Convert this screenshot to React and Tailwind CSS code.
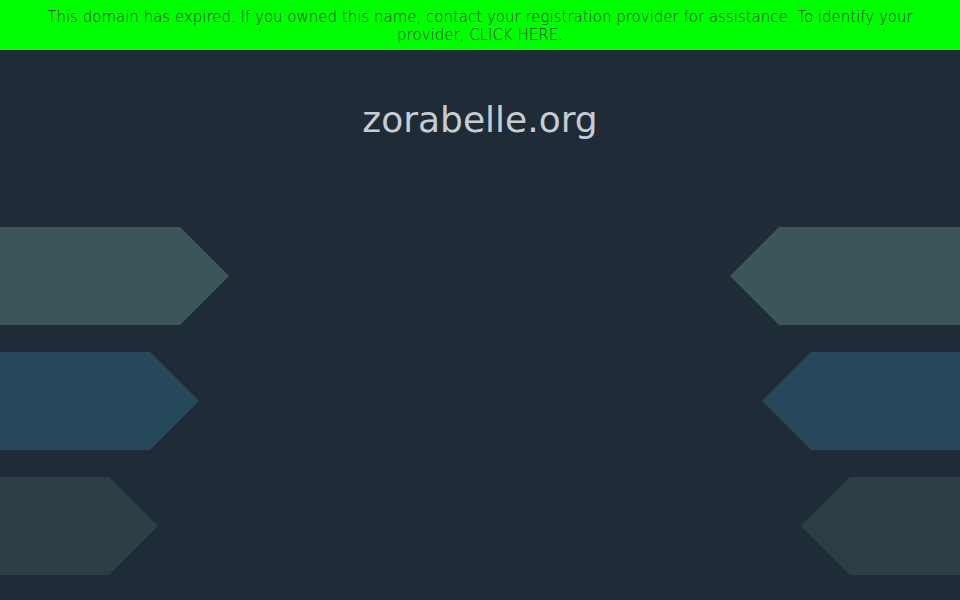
import React from 'react';

const rows = [
  { left: 229, right: 230, color: 'bg-[#3c5558]' },
  { left: 199, right: 198, color: 'bg-[#27475a]' },
  { left: 158, right: 159, color: 'bg-[#2c3e46]' },
];

const Arrow = ({ width, color, dir }) => (
  <div
    className={`h-[98px] ${color} ${
      dir === 'right'
        ? '[clip-path:polygon(0_0,calc(100%-49px)_0,100%_50%,calc(100%-49px)_100%,0_100%)]'
        : '[clip-path:polygon(49px_0,100%_0,100%_100%,49px_100%,0_50%)]'
    }`}
    style={{ width }}
  />
);

const App = () => {
  return (
    <div className="w-[960px] h-[600px] bg-[#1f2b36] overflow-hidden font-['DejaVu_Sans',sans-serif] flex flex-col">
      <div className="h-[50px] bg-[#00ff00] text-[#1f3a1f] text-[15px] font-extralight leading-[18px] text-center px-[40px] pt-[8px]">
        This domain has expired. If you owned this name, contact your registration provider for assistance. To identify your provider, CLICK HERE.
      </div>
      <h1 className="text-[36px] leading-[44px] text-[#c5ccd3] text-center mt-[48px]">zorabelle.org</h1>
      <div className="flex flex-col gap-[27px] mt-[85px]">
        {rows.map((r, i) => (
          <div key={i} className="flex justify-between">
            <Arrow width={r.left} color={r.color} dir="right" />
            <Arrow width={r.right} color={r.color} dir="left" />
          </div>
        ))}
      </div>
    </div>
  );
};

export default App;
